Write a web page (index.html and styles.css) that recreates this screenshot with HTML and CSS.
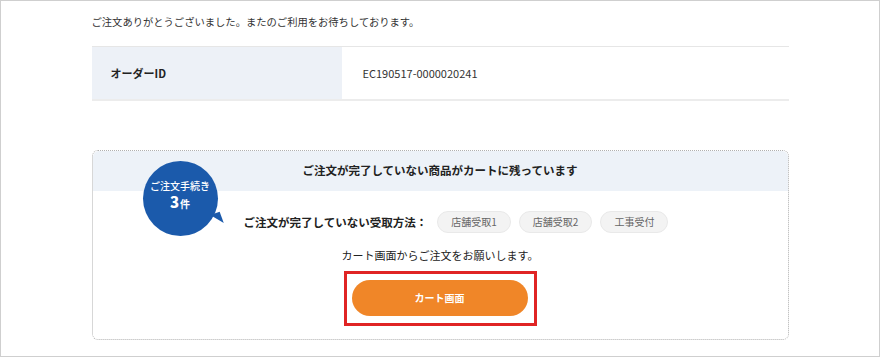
FILE: index.html
```html
<!DOCTYPE html>
<html lang="ja">
<head>
  <meta charset="UTF-8" />
  <meta name="viewport" content="width=device-width, initial-scale=1.0"/>
  <title>ご注文完了</title>
  <link rel="stylesheet" href="styles.css">
</head>
<body>
  <div class="frame">
    <div class="container">
      <p class="thanks">ご注文ありがとうございました。またのご利用をお待ちしております。</p>

      <table class="order-table">
        <tr>
          <th>オーダーID</th>
          <td>EC190517-0000020241</td>
        </tr>
      </table>

      <div class="cart-box">
        <div class="badge">
          <span class="badge-label">ご注文手続き</span>
          <span class="badge-count"><b>3</b>件</span>
        </div>
        <div class="cart-head">ご注文が完了していない商品がカートに残っています</div>
        <div class="cart-body">
          <div class="methods">
            <span class="methods-label">ご注文が完了していない受取方法：</span>
            <span class="chip">店舗受取1</span>
            <span class="chip">店舗受取2</span>
            <span class="chip">工事受付</span>
          </div>
          <p class="notice">カート画面からご注文をお願いします。</p>
          <div class="highlight">
            <button class="cart-btn">カート画面</button>
          </div>
        </div>
      </div>
    </div>
  </div>
</body>
</html>
```

FILE: styles.css
```css
* { box-sizing: border-box; margin: 0; padding: 0; }
body { font-family: "Noto Sans CJK JP", "Noto Sans", sans-serif; background: #fff; color: #222; }
.frame {
  width: 880px;
  height: 357px;
  border: 1px solid #cfcfcf;
  overflow: hidden;
}
.container { width: 697px; margin: 0 auto; padding-top: 13px; }
.thanks { font-size: 10.3px; line-height: 15px; color: #333; }

/* order table */
.order-table {
  width: 100%;
  margin-top: 17px;
  border-collapse: collapse;
  border-top: 1px solid #e6e6e6;
  border-bottom: 2px solid #ececec;
}
.order-table th {
  width: 250px;
  height: 53px;
  background: #edf1f7;
  text-align: left;
  padding-left: 19px;
  font-size: 11px;
  font-weight: bold;
}
.order-table td { padding-left: 21px; font-size: 11px; color: #333; }

/* cart reminder */
.cart-box {
  position: relative;
  margin-top: 49px;
  height: 190px;
  border: 1px dotted #b0b0b0;
  border-radius: 6px;
}
.cart-head {
  height: 40px;
  background: #edf2f8;
  border-radius: 6px 6px 0 0;
  text-align: center;
  line-height: 38px;
  font-size: 11.5px;
  font-weight: bold;
}
.badge {
  position: absolute;
  left: 50px;
  top: 10px;
  width: 75px;
  height: 75px;
  border-radius: 50%;
  background: #1b5aab;
  color: #fff;
  display: flex;
  flex-direction: column;
  align-items: center;
  justify-content: center;
  padding-bottom: 4px;
}
.badge::after {
  content: "";
  position: absolute;
  right: -4px;
  bottom: 11px;
  width: 0;
  height: 0;
  border-left: 10px solid transparent;
  border-top: 12px solid #1b5aab;
  transform: rotate(-20deg);
}
.badge-label { font-size: 10px; font-weight: 500; line-height: 14px; }
.badge-count { font-size: 10px; font-weight: bold; line-height: 18px; }
.badge-count b { font-size: 15px; margin-right: 1px; }

.cart-body { display: flex; flex-direction: column; align-items: center; }
.methods {
  display: flex;
  align-items: center;
  gap: 8px;
  margin-top: 20px;
  padding-left: 32px;
}
.methods-label { font-size: 11.5px; font-weight: bold; margin-right: 2px; }
.chip {
  height: 22px;
  padding: 0 13px;
  border-radius: 11px;
  background: #f3f3f3;
  border: 1px solid #e9e9e9;
  color: #666;
  font-size: 10px;
  line-height: 20px;
}
.notice { font-size: 11px; margin-top: 14px; line-height: 16px; }
.highlight {
  margin-top: 8px;
  border: 3px solid #e02424;
  padding: 6px 6px 7px 5px;
}
.cart-btn {
  display: block;
  width: 176px;
  height: 36px;
  border: none;
  border-radius: 18px;
  background: #f08628;
  color: #fff;
  font-family: inherit;
  font-size: 10px;
  font-weight: bold;
}
```
